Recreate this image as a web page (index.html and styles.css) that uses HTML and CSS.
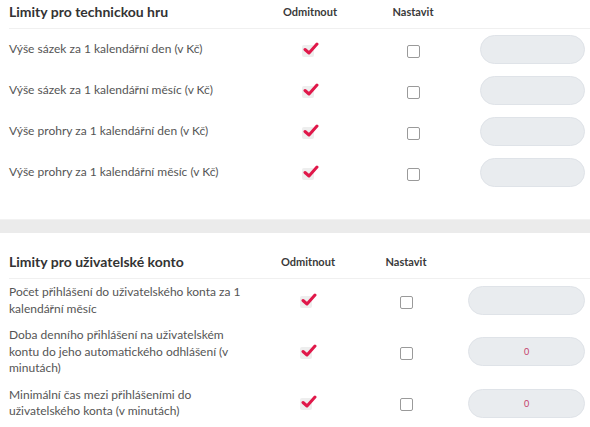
FILE: index.html
```html
<!DOCTYPE html>
<html lang="cs">
<head>
<meta charset="utf-8">
<link rel="stylesheet" href="styles.css">
</head>
<body>
<section class="block block-one">
  <div class="row head">
    <h2 class="title">Limity pro technickou hru</h2>
    <div class="colh">Odmitnout</div>
    <div class="colh">Nastavit</div>
    <div></div>
  </div>
  <div class="row">
    <div class="label">Výše sázek za 1 kalendářní den (v Kč)</div>
    <div class="cell"><span class="check"><svg viewBox="0 0 16 14" width="16" height="14"><path d="M2 7.5 L6 11 L14 2" fill="none" stroke="#e0184a" stroke-width="3" stroke-linecap="round" stroke-linejoin="round"/></svg></span></div>
    <div class="cell"><span class="box"></span></div>
    <div class="cell"><span class="input"></span></div>
  </div>
  <div class="row">
    <div class="label">Výše sázek za 1 kalendářní měsíc (v Kč)</div>
    <div class="cell"><span class="check"><svg viewBox="0 0 16 14" width="16" height="14"><path d="M2 7.5 L6 11 L14 2" fill="none" stroke="#e0184a" stroke-width="3" stroke-linecap="round" stroke-linejoin="round"/></svg></span></div>
    <div class="cell"><span class="box"></span></div>
    <div class="cell"><span class="input"></span></div>
  </div>
  <div class="row">
    <div class="label">Výše prohry za 1 kalendářní den (v Kč)</div>
    <div class="cell"><span class="check"><svg viewBox="0 0 16 14" width="16" height="14"><path d="M2 7.5 L6 11 L14 2" fill="none" stroke="#e0184a" stroke-width="3" stroke-linecap="round" stroke-linejoin="round"/></svg></span></div>
    <div class="cell"><span class="box"></span></div>
    <div class="cell"><span class="input"></span></div>
  </div>
  <div class="row">
    <div class="label">Výše prohry za 1 kalendářní měsíc (v Kč)</div>
    <div class="cell"><span class="check"><svg viewBox="0 0 16 14" width="16" height="14"><path d="M2 7.5 L6 11 L14 2" fill="none" stroke="#e0184a" stroke-width="3" stroke-linecap="round" stroke-linejoin="round"/></svg></span></div>
    <div class="cell"><span class="box"></span></div>
    <div class="cell"><span class="input"></span></div>
  </div>
</section>
<div class="band"></div>
<section class="block block-two">
  <div class="row head">
    <h2 class="title">Limity pro uživatelské konto</h2>
    <div class="colh">Odmitnout</div>
    <div class="colh">Nastavit</div>
    <div></div>
  </div>
  <div class="row">
    <div class="label">Počet přihlášení do uživatelského konta za 1 kalendářní měsíc</div>
    <div class="cell"><span class="check"><svg viewBox="0 0 16 14" width="16" height="14"><path d="M2 7.5 L6 11 L14 2" fill="none" stroke="#e0184a" stroke-width="3" stroke-linecap="round" stroke-linejoin="round"/></svg></span></div>
    <div class="cell"><span class="box"></span></div>
    <div class="cell"><span class="input"></span></div>
  </div>
  <div class="row">
    <div class="label">Doba denního přihlášení na uživatelském kontu do jeho automatického odhlášení (v minutách)</div>
    <div class="cell"><span class="check"><svg viewBox="0 0 16 14" width="16" height="14"><path d="M2 7.5 L6 11 L14 2" fill="none" stroke="#e0184a" stroke-width="3" stroke-linecap="round" stroke-linejoin="round"/></svg></span></div>
    <div class="cell"><span class="box"></span></div>
    <div class="cell"><span class="input">0</span></div>
  </div>
  <div class="row">
    <div class="label">Minimální čas mezi přihlášeními do uživatelského konta (v minutách)</div>
    <div class="cell"><span class="check"><svg viewBox="0 0 16 14" width="16" height="14"><path d="M2 7.5 L6 11 L14 2" fill="none" stroke="#e0184a" stroke-width="3" stroke-linecap="round" stroke-linejoin="round"/></svg></span></div>
    <div class="cell"><span class="box"></span></div>
    <div class="cell"><span class="input">0</span></div>
  </div>
</section>
</body>
</html>
```
FILE: styles.css
```css
html, body {
  margin: 0;
  padding: 0;
  background: #fff;
}
body {
  font-family: Lato, "Open Sans", sans-serif;
  color: #555;
  width: 590px;
  height: 427px;
  overflow: hidden;
}
.block {
  padding-left: 9px;
}
.row {
  display: grid;
  align-items: center;
}
.block-one .row {
  grid-template-columns: 265px 72px 134px 106px;
  min-height: 41px;
}
.block-two .row {
  grid-template-columns: 263px 72px 124px 117px;
  padding: 5px 0;
}
.block-one .head {
  min-height: 0;
  height: 28px;
  border-bottom: 1px solid #f0f0f0;
  padding-bottom: 0;
  align-items: start;
}
.block-two {
  padding-top: 12px;
}
.block-two .head {
  height: 33px;
  padding: 0;
  border-bottom: 1px solid #f0f0f0;
  align-items: center;
}
.title {
  margin: 0;
  font-size: 14px;
  font-weight: 700;
  color: #333;
  line-height: 18px;
}
.block-one .title { padding-top: 3px; }
.colh {
  font-size: 11px;
  font-weight: 700;
  color: #3a3a3a;
  text-align: center;
  line-height: 14px;
}
.block-one .colh { padding-top: 5px; }
.label {
  font-size: 12px;
  line-height: 16.5px;
  color: #555;
  max-width: 232px;
}
.cell {
  display: flex;
  justify-content: center;
  align-items: center;
}
.cell:last-child {
  justify-content: flex-start;
}
.check {
  position: relative;
  display: block;
  width: 17px;
  height: 16px;
}
.check::before {
  content: "";
  position: absolute;
  left: 0;
  top: 3px;
  width: 12px;
  height: 12px;
  background: #eeeeee;
  border-radius: 2px;
}
.check svg {
  position: absolute;
  left: 1px;
  top: 0;
}
.box {
  display: block;
  width: 11px;
  height: 11px;
  border: 1px solid #9a9a9a;
  border-radius: 2px;
  margin-top: 3px;
}
.input {
  display: flex;
  align-items: center;
  justify-content: center;
  box-sizing: border-box;
  height: 29px;
  width: 100%;
  background: #e9ecef;
  border: 1px solid #dfe3e8;
  border-radius: 15px;
  font-size: 9px;
  color: #c43d6b;
}
.block-one .input { width: 105px; }
.band {
  height: 13px;
  margin-top: 26px;
  background: #ebebeb;
  border-top: 1px solid #f2f2f2;
}
```
